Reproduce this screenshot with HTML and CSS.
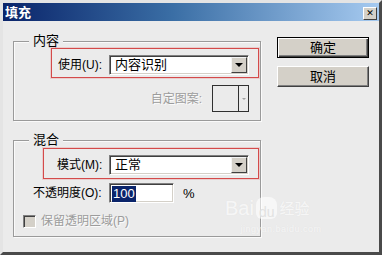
FILE: index.html
```html
<!DOCTYPE html>
<html lang="zh-CN">
<head>
  <meta charset="UTF-8">
  <title>填充</title>
  <link rel="stylesheet" href="styles.css">
</head>
<body>
  <div class="window">
    <!-- Title bar -->
    <div class="titlebar">
      <span class="title">填充</span>
      <span class="close">&#x2715;</span>
    </div>

    <div class="content">
      <div class="left-col">
        <!-- Content group -->
        <div class="group group-content">
          <span class="group-title">内容</span>
          <div class="mark mark-use">
            <span class="label label-use">使用(U):</span>
            <div class="select">
              <span class="select-text">内容识别</span>
              <span class="select-btn"><i class="arrow"></i></span>
            </div>
          </div>
          <div class="pattern-row">
            <span class="label disabled">自定图案:</span>
            <div class="pattern-box">
              <span class="pattern-swatch"></span>
              <span class="pattern-arrow"><i class="arrow arrow-gray"></i></span>
            </div>
          </div>
        </div>

        <!-- Blend group -->
        <div class="group group-blend">
          <span class="group-title">混合</span>
          <div class="mark mark-mode">
            <span class="label label-mode">模式(M):</span>
            <div class="select">
              <span class="select-text">正常</span>
              <span class="select-btn"><i class="arrow"></i></span>
            </div>
          </div>
          <div class="opacity-row">
            <span class="label label-opacity">不透明度(O):</span>
            <div class="input"><span class="selected">100</span></div>
            <span class="percent">%</span>
          </div>
          <div class="check-row">
            <span class="checkbox"></span>
            <span class="label disabled">保留透明区域(P)</span>
          </div>
        </div>
      </div>

      <!-- Buttons -->
      <div class="right-col">
        <button class="btn btn-default">确定</button>
        <button class="btn">取消</button>
      </div>
    </div>

    <!-- Watermark -->
    <div class="watermark">
      <div class="wm-logo">
        <span>Bai</span>
        <span class="wm-paw">du</span>
        <span class="wm-cn">经验</span>
      </div>
      <div class="wm-url">jingyan.baidu.com</div>
    </div>
  </div>
</body>
</html>
```

FILE: styles.css
```css
/* General */
body {
  margin: 0;
  width: 382px;
  height: 255px;
  overflow: hidden;
  font-family: 'Liberation Sans', 'Noto Sans CJK SC', sans-serif;
  font-size: 12px;
  color: #000;
}

.window {
  position: relative;
  width: 382px;
  height: 255px;
  box-sizing: border-box;
  border-style: solid;
  border-width: 3px;
  border-color: #e4e4e4 #4a4a4a #4a4a4a #e4e4e4;
  background-color: #ebebeb;
}

/* Title bar */
.titlebar {
  height: 18px;
  display: flex;
  align-items: center;
  justify-content: space-between;
  padding: 0 2px 0 2px;
  background: linear-gradient(to right, #0a246a 0%, #3a6ea5 45%, #a6caf0 100%);
}

.title {
  color: #fff;
  font-weight: bold;
  font-size: 13px;
  line-height: 18px;
  font-family: 'Noto Sans CJK SC', sans-serif;
}

.close {
  width: 14px;
  height: 13px;
  margin-top: 2px;
  box-sizing: border-box;
  background-color: #d4d0c8;
  border: 1px solid;
  border-color: #fff #404040 #404040 #fff;
  font-size: 9px;
  font-weight: bold;
  line-height: 11px;
  text-align: center;
  color: #000;
  font-family: 'DejaVu Sans', sans-serif;
}

/* Layout */
.content {
  display: flex;
  padding: 20px 0 0 10px;
}

.left-col {
  width: 248px;
}

.right-col {
  display: flex;
  flex-direction: column;
  gap: 8px;
  margin: -4px 0 0 16px;
}

/* Group boxes */
.group {
  border: 1px solid #9a9a9a;
  box-shadow: inset 1px 1px 0 #fafafa, 1px 1px 0 #fafafa;
}

.group-blend {
  margin-top: 19px;
}

.group-title {
  display: block;
  width: fit-content;
  height: 14px;
  line-height: 14px;
  margin: -8px 0 0 15px;
  padding: 0 4px;
  background-color: #ebebeb;
  font-size: 13px;
}

.label {
  line-height: 20px;
  white-space: nowrap;
}

.disabled {
  color: #9c9c9c;
  text-shadow: 1px 1px 0 #fbfbfb;
}

/* Red highlight boxes */
.mark {
  display: flex;
  border: 1px solid #d44a4a;
  box-shadow: 0 0 0 1px rgba(230, 150, 150, 0.35);
}

.mark-use {
  width: 208px;
  box-sizing: border-box;
  margin-left: 37px;
  padding: 6px 9px 2px 6px;
}

.mark-mode {
  width: 216px;
  box-sizing: border-box;
  margin: 1px 0 0 29px;
  padding: 6px 9px 3px 13px;
}

.label-use {
  width: 51px;
}

.label-mode {
  width: 52px;
}

/* Select boxes */
.select {
  display: flex;
  width: 140px;
  height: 20px;
  box-sizing: border-box;
  border: 1px solid;
  border-color: #808080 #fff #fff #808080;
  box-shadow: inset 1px 1px 0 #404040, inset -1px -1px 0 #d4d0c8;
  background-color: #fff;
}

.select-text {
  flex: 1;
  padding-left: 5px;
  line-height: 18px;
  font-size: 13px;
}

.select-btn {
  width: 16px;
  height: 16px;
  margin: 1px 1px 0 0;
  box-sizing: border-box;
  display: flex;
  align-items: center;
  justify-content: center;
  background-color: #d4d0c8;
  border: 1px solid;
  border-color: #f4f4f4 #404040 #404040 #f4f4f4;
}

.arrow {
  width: 0;
  height: 0;
  border-left: 4px solid transparent;
  border-right: 4px solid transparent;
  border-top: 4px solid #000;
}

.arrow-gray {
  border-left-width: 2px;
  border-right-width: 2px;
  border-top: 2px solid #a0a0a0;
}

/* Pattern picker */
.pattern-row {
  display: flex;
  justify-content: flex-end;
  align-items: center;
  gap: 10px;
  margin: 7px 11px 0 0;
  padding-bottom: 8px;
}

.pattern-box {
  display: flex;
  width: 37px;
  height: 27px;
  box-sizing: border-box;
  border: 1px solid #303030;
  background-color: #ebebeb;
}

.pattern-swatch {
  width: 25px;
  border-right: 1px solid #303030;
}

.pattern-arrow {
  flex: 1;
  display: flex;
  align-items: center;
  justify-content: center;
}

/* Opacity row */
.opacity-row {
  display: flex;
  align-items: center;
  margin: 4px 0 0 19px;
}

.label-opacity {
  width: 76px;
}

.input {
  width: 65px;
  height: 20px;
  box-sizing: border-box;
  border: 1px solid;
  border-color: #808080 #fff #fff #808080;
  box-shadow: inset 1px 1px 0 #404040, inset -1px -1px 0 #d4d0c8;
  background-color: #fff;
  padding: 2px 0 0 2px;
}

.selected {
  display: inline-block;
  height: 16px;
  line-height: 16px;
  padding: 0 1px;
  background-color: #0a246a;
  color: #fff;
  font-size: 13px;
}

.percent {
  margin-left: 9px;
  font-size: 13px;
}

/* Checkbox row */
.check-row {
  display: flex;
  align-items: center;
  gap: 5px;
  margin: 8px 0 0 9px;
  padding-bottom: 5px;
}

.checkbox {
  width: 13px;
  height: 13px;
  box-sizing: border-box;
  border: 1px solid;
  border-color: #808080 #fff #fff #808080;
  box-shadow: inset 1px 1px 0 #404040, inset -1px -1px 0 #d4d0c8;
  background-color: #d4d0c8;
}

/* Buttons */
.btn {
  width: 92px;
  height: 21px;
  box-sizing: border-box;
  padding: 0;
  font-family: 'Liberation Sans', 'Noto Sans CJK SC', sans-serif;
  font-size: 13px;
  line-height: 17px;
  color: #000;
  background-color: #d4d0c8;
  border: 1px solid;
  border-color: #fff #404040 #404040 #fff;
  box-shadow: inset -1px -1px 0 #808080;
}

.btn-default {
  border: 1px solid #000;
  box-shadow: inset 1px 1px 0 #fff, inset -1px -1px 0 #404040, inset -2px -2px 0 #808080;
}

/* Watermark */
.watermark {
  position: absolute;
  left: 222px;
  top: 194px;
  width: 112px;
  text-align: center;
  color: rgba(255, 255, 255, 0.7);
  text-shadow: 0 0 1px rgba(220, 220, 220, 0.6);
}

.wm-logo {
  display: flex;
  align-items: flex-end;
  font-size: 20px;
  line-height: 22px;
}

.wm-paw {
  margin: 0 2px;
  padding: 8px 3px 0;
  font-size: 14px;
  line-height: 14px;
  border-radius: 8px 8px 6px 6px;
  background-color: rgba(255, 255, 255, 0.6);
  color: #e2e2e2;
  text-shadow: none;
}

.wm-cn {
  font-family: 'Noto Sans CJK SC', sans-serif;
  font-size: 15px;
}

.wm-url {
  font-size: 9px;
  line-height: 12px;
  margin-top: 4px;
  letter-spacing: 0.5px;
  color: rgba(255, 255, 255, 0.6);
}
```
